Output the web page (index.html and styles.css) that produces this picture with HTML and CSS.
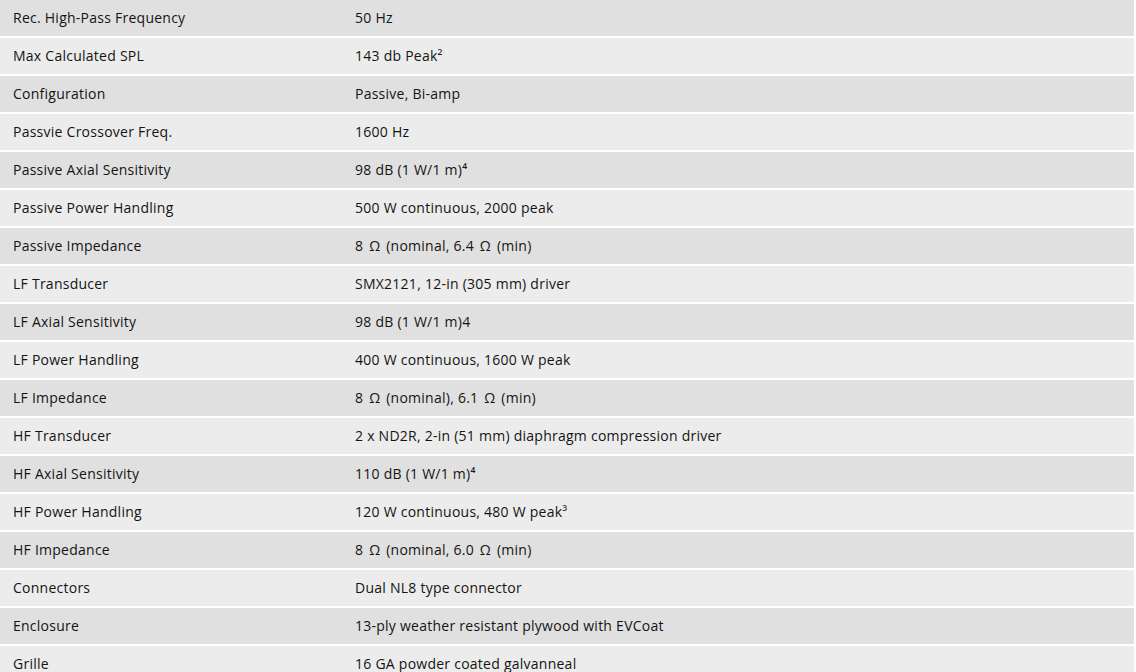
FILE: index.html
```html
<!DOCTYPE html>
<html>
<head>
<meta charset="utf-8">
<link rel="stylesheet" href="styles.css">
</head>
<body>
<div class="specs">
<div class="row dark"><div class="label">Rec. High-Pass Frequency</div><div class="value">50 Hz</div></div>
<div class="row light"><div class="label">Max Calculated SPL</div><div class="value">143 db Peak²</div></div>
<div class="row dark"><div class="label">Configuration</div><div class="value">Passive, Bi-amp</div></div>
<div class="row light"><div class="label">Passvie Crossover Freq.</div><div class="value">1600 Hz</div></div>
<div class="row dark"><div class="label">Passive Axial Sensitivity</div><div class="value">98 dB (1 W/1 m)⁴</div></div>
<div class="row light"><div class="label">Passive Power Handling</div><div class="value">500 W continuous, 2000 peak</div></div>
<div class="row dark"><div class="label">Passive Impedance</div><div class="value">8 <span class="ohm">Ω</span> (nominal, 6.4 <span class="ohm">Ω</span> (min)</div></div>
<div class="row light"><div class="label">LF Transducer</div><div class="value">SMX2121, 12-in (305 mm) driver</div></div>
<div class="row dark"><div class="label">LF Axial Sensitivity</div><div class="value">98 dB (1 W/1 m)4</div></div>
<div class="row light"><div class="label">LF Power Handling</div><div class="value">400 W continuous, 1600 W peak</div></div>
<div class="row dark"><div class="label">LF Impedance</div><div class="value">8 <span class="ohm">Ω</span> (nominal), 6.1 <span class="ohm">Ω</span> (min)</div></div>
<div class="row light"><div class="label">HF Transducer</div><div class="value">2 x ND2R, 2-in (51 mm) diaphragm compression driver</div></div>
<div class="row dark"><div class="label">HF Axial Sensitivity</div><div class="value">110 dB (1 W/1 m)⁴</div></div>
<div class="row light"><div class="label">HF Power Handling</div><div class="value">120 W continuous, 480 W peak³</div></div>
<div class="row dark"><div class="label">HF Impedance</div><div class="value">8 <span class="ohm">Ω</span> (nominal, 6.0 <span class="ohm">Ω</span> (min)</div></div>
<div class="row light"><div class="label">Connectors</div><div class="value">Dual NL8 type connector</div></div>
<div class="row dark"><div class="label">Enclosure</div><div class="value">13-ply weather resistant plywood with EVCoat</div></div>
<div class="row light"><div class="label">Grille</div><div class="value">16 GA powder coated galvanneal</div></div>
</div>
</body>
</html>
```
FILE: styles.css
```css
html, body {
  margin: 0;
  padding: 0;
  background: #ffffff;
}
.specs {
  width: 1134px;
  display: flex;
  flex-direction: column;
  gap: 2px;
  font-family: "Open Sans", "Liberation Sans", sans-serif;
  font-size: 14px;
  letter-spacing: 0.25px;
  color: #141414;
}
.row {
  height: 36px;
  display: flex;
  align-items: center;
  line-height: 20px;
}
.row.dark { background: #e0e0e0; }
.row.light { background: #ececec; }
.label {
  width: 342px;
  padding-left: 13px;
  flex: none;
}
.value {
  flex: 1;
  padding-right: 13px;
}
.ohm {
  margin: 0 2px;
}
```
